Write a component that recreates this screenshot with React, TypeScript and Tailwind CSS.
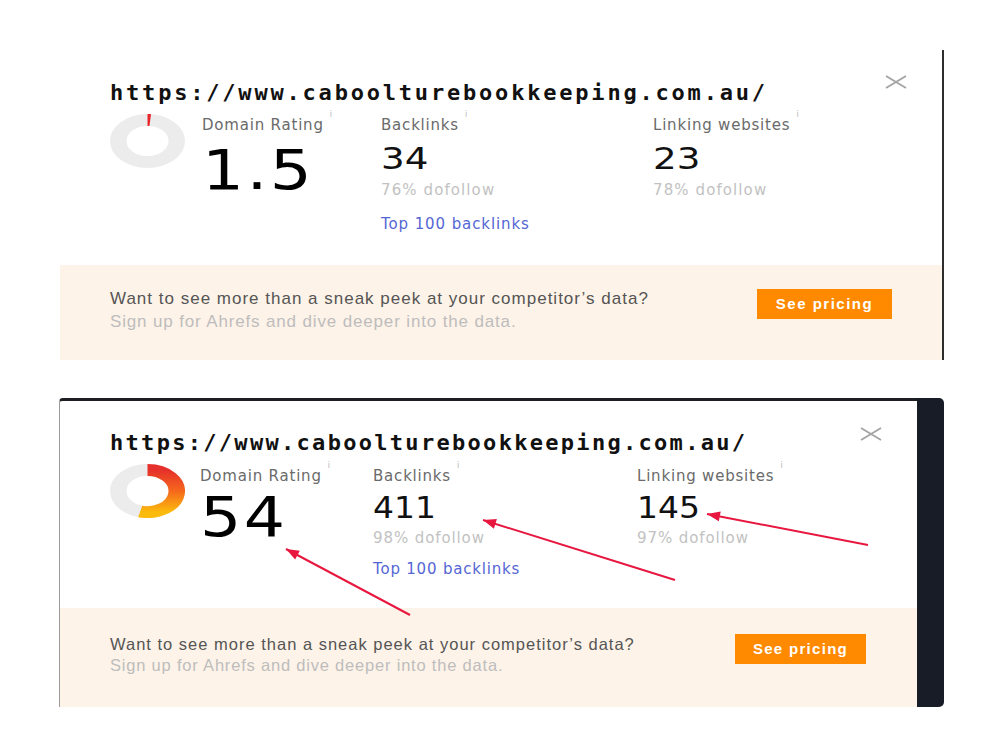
import React from "react";

type Variant = "a" | "b";

const ARROWS = [
	{ from: [410, 615], to: [286, 549] },
	{ from: [675, 580], to: [483, 520] },
	{ from: [868, 545], to: [707, 514] },
];

// arc from 12 o'clock, clockwise, for the given percent
const arcPath = (pct: number, r: number) => {
	const ang = (-90 + (pct / 100) * 360) * (Math.PI / 180);
	const x = 50 + r * Math.cos(ang);
	const y = 50 + r * Math.sin(ang);
	const large = pct > 50 ? 1 : 0;
	return `M 50 ${50 - r} A ${r} ${r} 0 ${large} 1 ${x} ${y}`;
};

const Donut = ({ value, gradId }: { value: number; gradId: string }) => {
	const r = 39;
	return (
		<svg width="75" height="54" viewBox="0 0 100 100" preserveAspectRatio="none" className="shrink-0">
			<defs>
				<linearGradient id={gradId} x1="0" y1="11" x2="0" y2="89" gradientUnits="userSpaceOnUse">
					<stop offset="0" stopColor="#e6302b" />
					<stop offset="0.5" stopColor="#f5681c" />
					<stop offset="1" stopColor="#fbbb0c" />
				</linearGradient>
			</defs>
			<circle cx="50" cy="50" r={r} fill="none" stroke="#ececec" strokeWidth="22" />
			{value < 5 ? (
				<path d={arcPath(1.5, r)} fill="none" stroke="#e8262c" strokeWidth="22" />
			) : (
				<path d={arcPath(value, r)} fill="none" stroke={`url(#${gradId})`} strokeWidth="22" />
			)}
		</svg>
	);
};

const CloseIcon = () => (
	<svg width="22" height="14" viewBox="0 0 22 14" className="shrink-0">
		<path d="M1 1 L21 13 M21 1 L1 13" stroke="#a3a3a3" strokeWidth="1.8" fill="none" />
	</svg>
);

const Info = () => <sup className="ml-[6px] align-top text-[8px] leading-none text-[#b5b5b5]">i</sup>;

const Label = ({ children }: { children: React.ReactNode }) => (
	<p className="text-[15px] leading-[20px] tracking-[0.8px] text-[#6a6a6a]">
		{children}
		<Info />
	</p>
);

const Card = ({ v, dr, backlinks, blPct, sites, sitesPct }: { v: Variant; dr: string; backlinks: string; blPct: string; sites: string; sitesPct: string }) => {
	const a = v === "a";
	return (
		<div className="flex flex-col">
			<div className={a ? "flex h-[215px] flex-col pl-[50px] pr-[35px] pt-[30px]" : "flex h-[207px] flex-col pl-[50px] pr-[35px] pt-[29px]"}>
				<div className="flex items-start justify-between">
					<h2
						className={
							a
								? "text-[22px] leading-[26px] font-bold tracking-[2.8px] text-[#111]"
								: "text-[22px] leading-[26px] font-bold tracking-[2.3px] text-[#111]"
						}
						style={{ fontFamily: '"DejaVu Sans Mono", "Liberation Mono", monospace' }}
					>
						https://www.caboolturebookkeeping.com.au/
					</h2>
					<div className={a ? "-mt-[5px]" : "-mt-[3px]"}>
						<CloseIcon />
					</div>
				</div>

				<div className="mt-[8px] flex items-start">
					<Donut value={a ? 1.5 : 54} gradId={`g-${v}`} />
					<div className={a ? "ml-[17px] w-[179px] pt-[1px]" : "ml-[15px] w-[173px] pt-[2px]"}>
						<Label>Domain Rating</Label>
						<p
							className={
								a
									? "mt-[8px] origin-left scale-x-[1.2] text-[55px] leading-none tracking-[2px] text-black"
									: "mt-[4px] origin-left scale-x-[1.18] text-[55px] leading-none tracking-[2px] text-black"
							}
						>
							{dr}
						</p>
					</div>
					<div className={a ? "w-[272px] pt-[1px]" : "w-[264px] pt-[2px]"}>
						<Label>Backlinks</Label>
						<p className={a ? "mt-[8px] origin-left scale-x-[1.2] text-[31px] leading-none text-[#111]" : "mt-[7px] origin-left scale-x-[1.1] text-[30px] leading-none text-[#111]"}>
							{backlinks}
						</p>
						<p className={a ? "mt-[6px] text-[15px] leading-[20px] tracking-[1.1px] text-[#c2c2c2]" : "mt-[5px] text-[15px] leading-[20px] tracking-[0.9px] text-[#c2c2c2]"}>
							{blPct}
						</p>
						<p className={a ? "mt-[14px] text-[15px] leading-[20px] tracking-[0.9px] text-[#5466d4]" : "mt-[11px] text-[15px] leading-[20px] tracking-[0.8px] text-[#5466d4]"}>
							Top 100 backlinks
						</p>
					</div>
					<div className={a ? "pt-[1px]" : "pt-[2px]"}>
						<Label>Linking websites</Label>
						<p className={a ? "mt-[8px] origin-left scale-x-[1.2] text-[31px] leading-none text-[#111]" : "mt-[7px] origin-left scale-x-[1.1] text-[30px] leading-none text-[#111]"}>
							{sites}
						</p>
						<p className={a ? "mt-[6px] text-[15px] leading-[20px] tracking-[1.1px] text-[#c2c2c2]" : "mt-[5px] text-[15px] leading-[20px] tracking-[0.9px] text-[#c2c2c2]"}>
							{sitesPct}
						</p>
					</div>
				</div>
			</div>

			<div
				className={
					a
						? "flex h-[95px] items-start justify-between bg-[#fdf3e8] pl-[50px] pr-[50px] pt-[23px]"
						: "flex h-[99px] items-start justify-between bg-[#fdf3e8] pl-[50px] pr-[51px] pt-[26px]"
				}
				style={{ fontFamily: '"Liberation Sans", Arial, sans-serif' }}
			>
				<div>
					<p className={a ? "text-[17px] leading-[22px] tracking-[1px] text-[#555]" : "text-[16.5px] leading-[21px] tracking-[1px] text-[#555]"}>
						Want to see more than a sneak peek at your competitor’s data?
					</p>
					<p className={a ? "mt-[1px] text-[17px] leading-[22px] tracking-[0.85px] text-[#bdbdbd]" : "text-[16.5px] leading-[21px] tracking-[0.8px] text-[#bdbdbd]"}>
						Sign up for Ahrefs and dive deeper into the data.
					</p>
				</div>
				<button
					className={
						a
							? "mt-[1px] flex h-[30px] w-[135px] items-center justify-center bg-[#ff8a00] text-[15px] font-bold tracking-[1.5px] text-white"
							: "flex h-[30px] w-[131px] items-center justify-center bg-[#ff8a00] text-[15px] font-bold tracking-[1.3px] text-white"
					}
				>
					See pricing
				</button>
			</div>
		</div>
	);
};

const head = (from: number[], to: number[]) => {
	const dx = to[0] - from[0];
	const dy = to[1] - from[1];
	const l = Math.hypot(dx, dy);
	const ux = dx / l;
	const uy = dy / l;
	const bx = to[0] - ux * 13;
	const by = to[1] - uy * 13;
	return `${to[0]},${to[1]} ${bx - uy * 5},${by + ux * 5} ${bx + uy * 5},${by - ux * 5}`;
};

export default function App() {
	return (
		<div className="relative h-[750px] w-[1000px] overflow-hidden bg-white pt-[50px]" style={{ fontFamily: '"DejaVu Sans", sans-serif' }}>
			<div className="ml-[60px] w-[884px] border-r-2 border-[#2e2e2e]">
				<Card v="a" dr="1.5" backlinks="34" blPct="76% dofollow" sites="23" sitesPct="78% dofollow" />
			</div>

			<div className="ml-[59px] mt-[38px] flex w-[885px]">
				<div className="w-[858px] rounded-tl-[4px] border-l border-t-[3px] border-l-[#9a9a9a] border-t-[#1d1f24]">
					<Card v="b" dr="54" backlinks="411" blPct="98% dofollow" sites="145" sitesPct="97% dofollow" />
				</div>
				<div className="w-[27px] rounded-r-[5px] bg-[#171c27]" />
			</div>

			<svg className="pointer-events-none absolute inset-0" width="1000" height="750">
				{ARROWS.map((ar, i) => (
					<g key={i}>
						<line x1={ar.from[0]} y1={ar.from[1]} x2={ar.to[0]} y2={ar.to[1]} stroke="#e8173f" strokeWidth="2" />
						<polygon points={head(ar.from, ar.to)} fill="#e8173f" />
					</g>
				))}
			</svg>
		</div>
	);
}
